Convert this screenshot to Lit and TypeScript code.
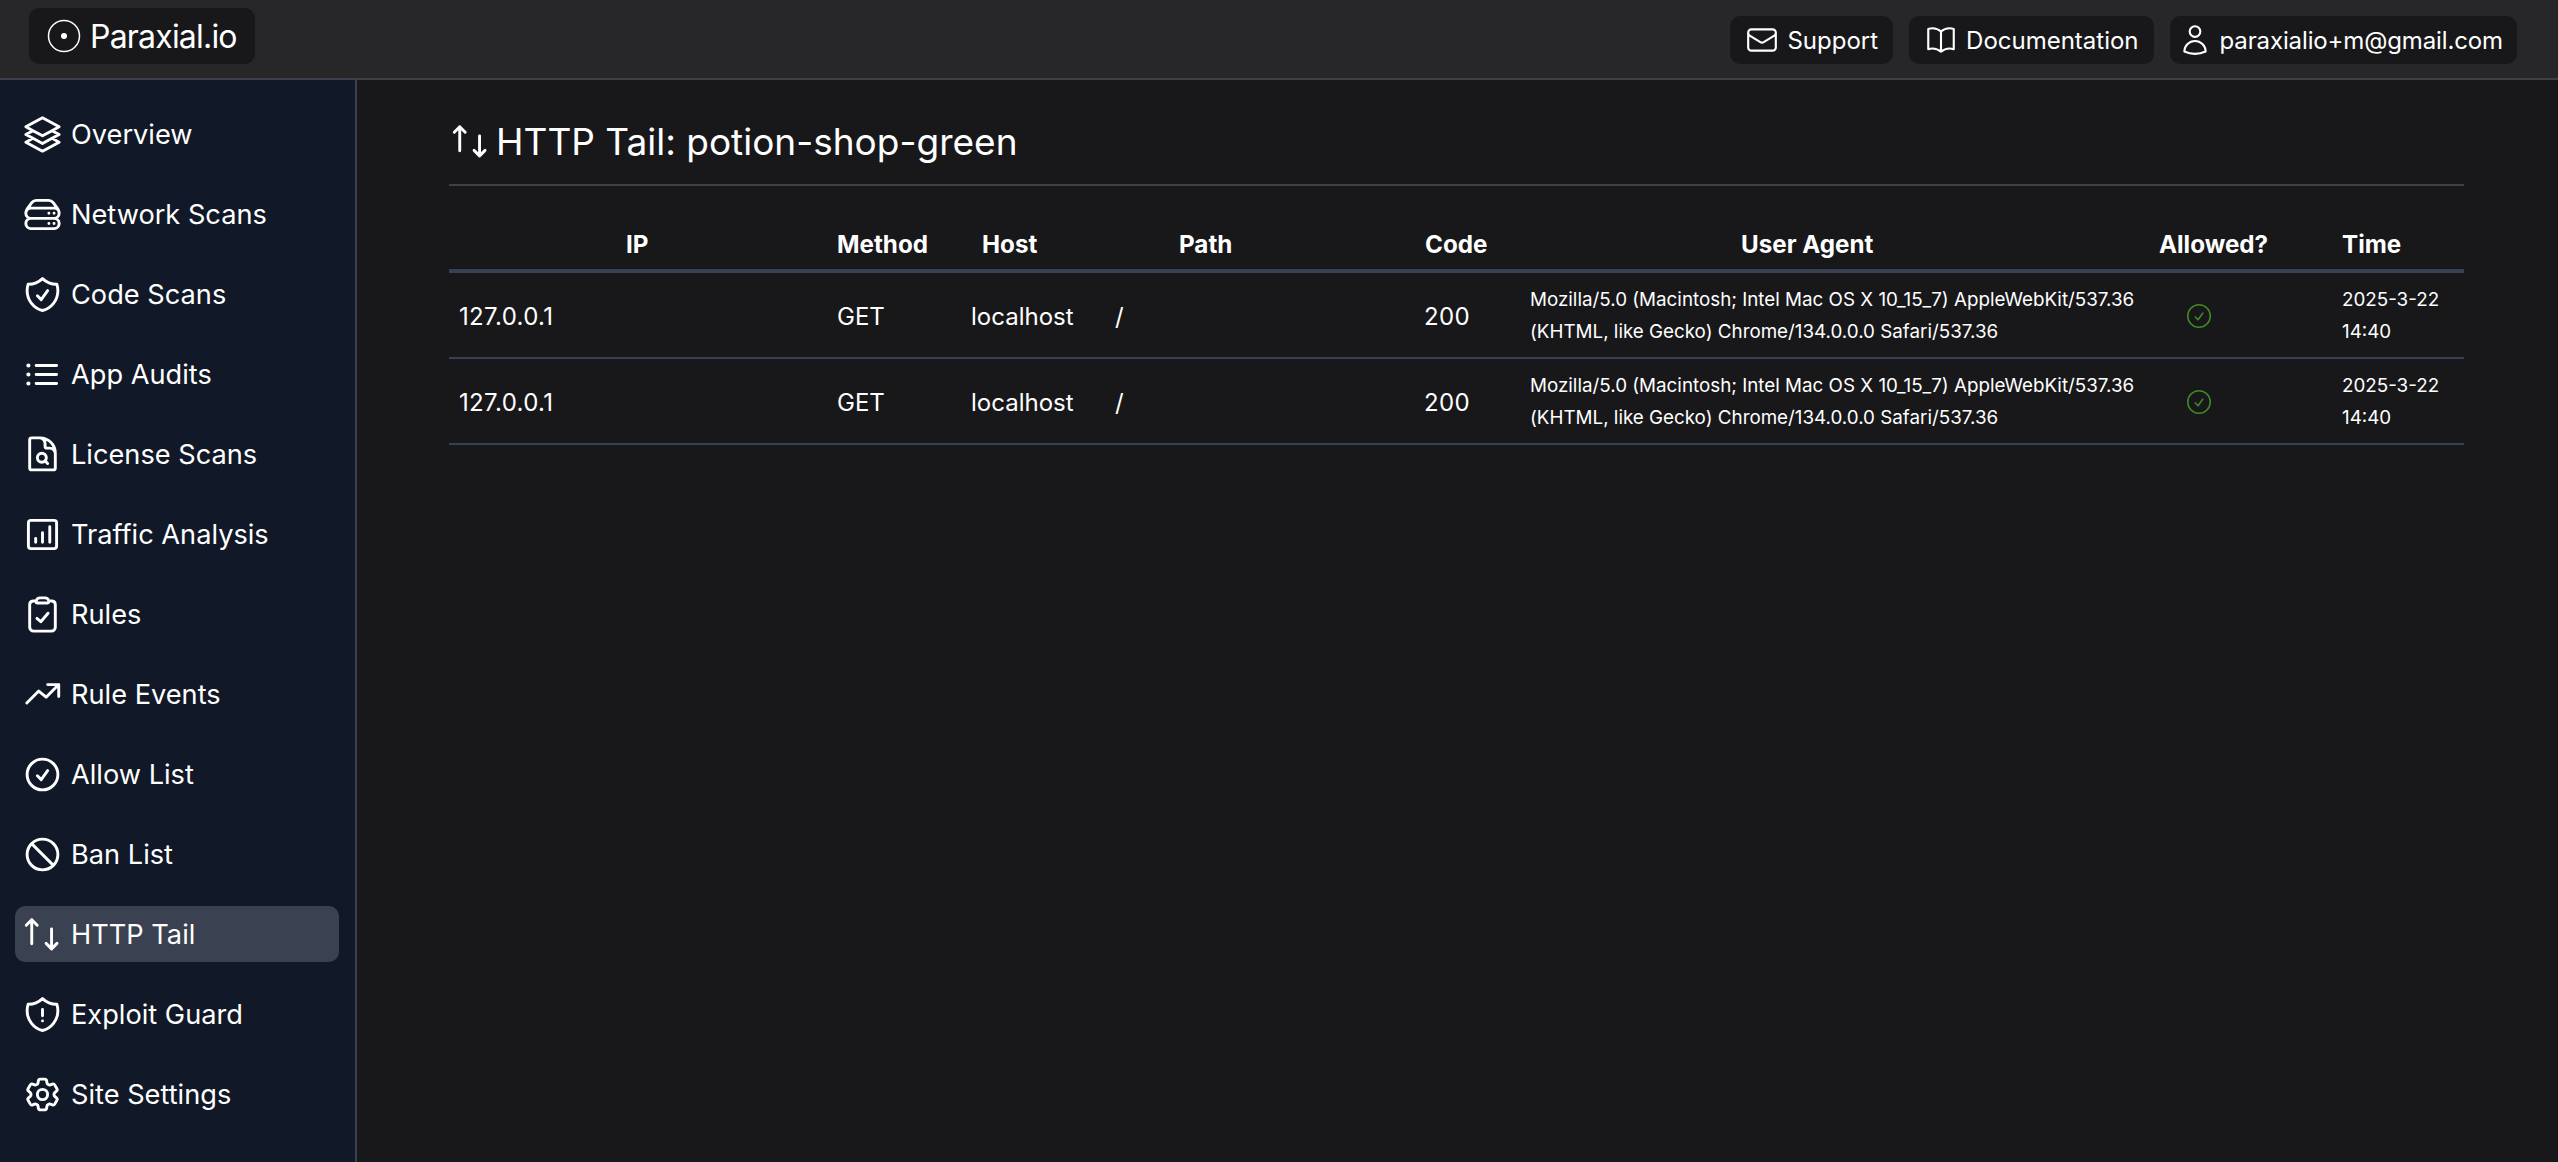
import { LitElement, html, svg, css } from 'lit';
import { customElement } from 'lit/decorators.js';

const ICONS: Record<string, string> = {
  stack: 'M6.429 9.75 2.25 12l4.179 2.25m0-4.5 5.571 3 5.571-3m-11.142 0L2.25 7.5 12 2.25l9.75 5.25-4.179 2.25m0 0L21.75 12l-4.179 2.25m0 0 4.179 2.25L12 21.75 2.25 16.5l4.179-2.25m11.142 0-5.571 3-5.571-3',
  server: 'M5.25 14.25h13.5m-13.5 0a3 3 0 0 1-3-3m3 3a3 3 0 1 0 0 6h13.5a3 3 0 1 0 0-6m-16.5-3a3 3 0 0 1 3-3h13.5a3 3 0 0 1 3 3m-19.5 0a4.5 4.5 0 0 1 .9-2.7L5.737 5.1a3.375 3.375 0 0 1 2.7-1.35h7.126c1.062 0 2.062.5 2.7 1.35l2.587 3.45a4.5 4.5 0 0 1 .9 2.7m0 0a3 3 0 0 1-3 3m0 3h.008v.008h-.008v-.008Zm0-6h.008v.008h-.008v-.008Zm-3 6h.008v.008h-.008v-.008Zm0-6h.008v.008h-.008v-.008Z',
  shieldCheck: 'M9 12.75 11.25 15 15 9.75m-3-7.036A11.959 11.959 0 0 1 3.598 6 11.99 11.99 0 0 0 3 9.749c0 5.592 3.824 10.29 9 11.623 5.176-1.332 9-6.03 9-11.622 0-1.31-.21-2.571-.598-3.751h-.152c-3.196 0-6.1-1.248-8.25-3.285Z',
  list: 'M8.25 6.75h12M8.25 12h12m-12 5.25h12M3.75 6.75h.007v.008H3.75V6.75Zm.375 0a.375.375 0 1 1-.75 0 .375.375 0 0 1 .75 0ZM3.75 12h.007v.008H3.75V12Zm.375 0a.375.375 0 1 1-.75 0 .375.375 0 0 1 .75 0Zm-.375 5.25h.007v.008H3.75v-.008Zm.375 0a.375.375 0 1 1-.75 0 .375.375 0 0 1 .75 0Z',
  docSearch: 'M19.5 14.25v-2.625a3.375 3.375 0 0 0-3.375-3.375h-1.5A1.125 1.125 0 0 1 13.5 7.125v-1.5a3.375 3.375 0 0 0-3.375-3.375H8.25m5.231 13.481L15 17.25m-4.5-15H5.625c-.621 0-1.125.504-1.125 1.125v16.5c0 .621.504 1.125 1.125 1.125h12.75c.621 0 1.125-.504 1.125-1.125V11.25a9 9 0 0 0-9-9Zm3.75 11.625a2.625 2.625 0 1 1-5.25 0 2.625 2.625 0 0 1 5.25 0Z',
  chart: 'M8 16.5v-2.25M12 16.5v-5.5M16.25 16.5v-9M5.25 20.25h13.5a1.5 1.5 0 0 0 1.5-1.5V5.25a1.5 1.5 0 0 0-1.5-1.5H5.25a1.5 1.5 0 0 0-1.5 1.5v13.5a1.5 1.5 0 0 0 1.5 1.5Z',
  clipboard: 'M8.75 14.25 11 16.25 15.25 11.25M15.666 3.888A2.25 2.25 0 0 0 13.5 2.25h-3c-1.03 0-1.9.693-2.166 1.638m7.332 0c.055.194.084.4.084.612v0a.75.75 0 0 1-.75.75H9a.75.75 0 0 1-.75-.75v0c0-.212.03-.418.084-.612m7.332 0c.646.049 1.288.11 1.927.184 1.1.128 1.907 1.077 1.907 2.185V19.5a2.25 2.25 0 0 1-2.25 2.25H6.75A2.25 2.25 0 0 1 4.5 19.5V6.257c0-1.108.806-2.057 1.907-2.185a48.208 48.208 0 0 1 1.927-.184',
  trending: 'M2.8 17 9.8 10l4.3 3.6L21.5 6.2m0 0H15m6.5 0v7',
  checkCircle: 'M9 12.75 11.25 15 15 9.75M21 12a9 9 0 1 1-18 0 9 9 0 0 1 18 0Z',
  ban: 'M18.364 18.364A9 9 0 0 0 5.636 5.636m12.728 12.728A9 9 0 0 1 5.636 5.636m12.728 12.728L5.636 5.636',
  arrows: 'M2.5 6.6 5.7 3.4m0 0 3.2 3.2M5.7 3.4v14M20.5 17.2 17.3 20.4m0 0-3.2-3.2M17.3 20.4V8.7',
  shieldAlert: 'M12 9v3.75m0-10.036A11.959 11.959 0 0 1 3.598 6 11.99 11.99 0 0 0 3 9.75c0 5.592 3.824 10.29 9 11.622 5.176-1.332 9-6.03 9-11.622 0-1.31-.21-2.57-.598-3.75h-.152c-3.196 0-6.1-1.249-8.25-3.286Zm0 13.036h.008v.008H12v-.008Z',
  cog: 'M9.594 3.94c.09-.542.56-.94 1.11-.94h2.593c.55 0 1.02.398 1.11.94l.213 1.281c.063.374.313.686.645.87.074.04.147.083.22.127.325.196.72.257 1.075.124l1.217-.456a1.125 1.125 0 0 1 1.37.49l1.296 2.247a1.125 1.125 0 0 1-.26 1.431l-1.003.827c-.293.241-.438.613-.43.992a7.723 7.723 0 0 1 0 .255c-.008.378.137.75.43.991l1.004.827c.424.35.534.955.26 1.43l-1.298 2.247a1.125 1.125 0 0 1-1.369.491l-1.217-.456c-.355-.133-.75-.072-1.076.124a6.47 6.47 0 0 1-.22.128c-.331.183-.581.495-.644.869l-.213 1.281c-.09.543-.56.94-1.11.94h-2.594c-.55 0-1.019-.398-1.11-.94l-.213-1.281c-.062-.374-.312-.686-.644-.87a6.52 6.52 0 0 1-.22-.127c-.325-.196-.72-.257-1.076-.124l-1.217.456a1.125 1.125 0 0 1-1.369-.49l-1.297-2.247a1.125 1.125 0 0 1 .26-1.431l1.004-.827c.292-.24.437-.613.43-.991a6.932 6.932 0 0 1 0-.255c.007-.38-.138-.751-.43-.992l-1.004-.827a1.125 1.125 0 0 1-.26-1.43l1.297-2.247a1.125 1.125 0 0 1 1.37-.491l1.216.456c.356.133.751.072 1.076-.124.072-.044.146-.086.22-.128.332-.183.582-.495.644-.869l.214-1.28ZM15 12a3 3 0 1 1-6 0 3 3 0 0 1 6 0Z',
  envelope: 'M21.75 6.75v10.5a2.25 2.25 0 0 1-2.25 2.25h-15a2.25 2.25 0 0 1-2.25-2.25V6.75m19.5 0A2.25 2.25 0 0 0 19.5 4.5h-15a2.25 2.25 0 0 0-2.25 2.25m19.5 0v.243a2.25 2.25 0 0 1-1.07 1.916l-7.5 4.615a2.25 2.25 0 0 1-2.36 0L3.32 8.91a2.25 2.25 0 0 1-1.07-1.916V6.75',
  book: 'M12 6.042A8.967 8.967 0 0 0 6 3.75c-1.052 0-2.062.18-3 .512v14.25A8.987 8.987 0 0 1 6 18c2.305 0 4.408.867 6 2.292m0-14.25a8.966 8.966 0 0 1 6-2.292c1.052 0 2.062.18 3 .512v14.25A8.987 8.987 0 0 0 18 18a8.967 8.967 0 0 0-6 2.292m0-14.25v14.25',
  user: 'M15.75 6a3.75 3.75 0 1 1-7.5 0 3.75 3.75 0 0 1 7.5 0ZM4.501 20.118a7.5 7.5 0 0 1 14.998 0A17.933 17.933 0 0 1 12 21.75c-2.676 0-5.216-.584-7.499-1.632Z',
};

const NAV = [
  { label: 'Overview', icon: 'stack' },
  { label: 'Network Scans', icon: 'server' },
  { label: 'Code Scans', icon: 'shieldCheck' },
  { label: 'App Audits', icon: 'list' },
  { label: 'License Scans', icon: 'docSearch' },
  { label: 'Traffic Analysis', icon: 'chart' },
  { label: 'Rules', icon: 'clipboard' },
  { label: 'Rule Events', icon: 'trending' },
  { label: 'Allow List', icon: 'checkCircle' },
  { label: 'Ban List', icon: 'ban' },
  { label: 'HTTP Tail', icon: 'arrows', active: true },
  { label: 'Exploit Guard', icon: 'shieldAlert' },
  { label: 'Site Settings', icon: 'cog' },
];

const HEADERS = ['IP', 'Method', 'Host', 'Path', 'Code', 'User Agent', 'Allowed?', 'Time'];

const UA = 'Mozilla/5.0 (Macintosh; Intel Mac OS X 10_15_7) AppleWebKit/537.36 (KHTML, like Gecko) Chrome/134.0.0.0 Safari/537.36';

const ROWS = [
  { ip: '127.0.0.1', method: 'GET', host: 'localhost', path: '/', code: '200', ua: UA, date: '2025-3-22', time: '14:40' },
  { ip: '127.0.0.1', method: 'GET', host: 'localhost', path: '/', code: '200', ua: UA, date: '2025-3-22', time: '14:40' },
];

function icon(name: string, cls = 'icon') {
  return html`<svg class=${cls} viewBox="0 0 24 24" fill="none" stroke="currentColor" stroke-linecap="round" stroke-linejoin="round">${svg`<path d=${ICONS[name]}></path>`}</svg>`;
}

@customElement('app-root')
export class AppRoot extends LitElement {
  static styles = css`
    :host {
      display: grid;
      grid-template-columns: 357px 1fr;
      grid-template-rows: 80px 1fr;
      height: 100vh;
      overflow: hidden;
      background: #18181b;
      color: #fff;
      font-family: Inter, 'Liberation Sans', sans-serif;
    }
    .topbar {
      grid-column: 1 / 3;
      display: flex;
      align-items: flex-start;
      justify-content: space-between;
      box-sizing: border-box;
      padding: 8px 41px 0 29px;
      background: #27272a;
      border-bottom: 2px solid #3f3f46;
    }
    .logo {
      display: flex;
      align-items: center;
      gap: 7px;
      height: 56px;
      padding: 0 18px 0 16px;
      box-sizing: border-box;
      background: #18181b;
      border-radius: 10px;
      font-size: 32px;
      letter-spacing: -0.8px;
    }
    .logo svg {
      width: 38px;
      height: 38px;
    }
    .links {
      display: flex;
      gap: 16px;
      padding-top: 8px;
    }
    .link {
      display: flex;
      align-items: center;
      gap: 8px;
      height: 48px;
      padding: 0 15px;
      box-sizing: border-box;
      background: #18181b;
      border-radius: 10px;
      font-size: 24px;
    }
    .link.user {
      padding: 0 14px 0 8px;
      letter-spacing: -0.13px;
    }
    .link .icon {
      width: 34px;
      height: 34px;
      stroke-width: 1.5;
    }
    .sidebar {
      display: flex;
      flex-direction: column;
      gap: 24px;
      padding: 26px 16px 0 15px;
      background: #111827;
      border-right: 2px solid #374151;
      border-top: 1px solid #374151;
      margin-top: -1px;
      box-sizing: border-box;
    }
    .nav-item {
      display: flex;
      align-items: center;
      height: 56px;
      flex: none;
      padding-left: 7px;
      border-radius: 10px;
      font-size: 27.2px;
    }
    .nav-item.active {
      background: #3a4150;
    }
    .nav-item .icon {
      width: 41px;
      height: 41px;
      stroke-width: 1.7;
      margin-right: 8px;
      flex: none;
    }
    main {
      padding: 0 94px 0 92px;
      min-width: 0;
    }
    h1 {
      display: flex;
      align-items: center;
      gap: 5px;
      height: 106px;
      margin: 0;
      box-sizing: border-box;
      padding: 18px 0 0 1px;
      border-bottom: 2px solid #3f3f46;
      font-size: 37px;
      font-weight: 400;
    }
    h1 .icon {
      width: 41px;
      height: 41px;
      stroke-width: 1.7;
    }
    .head,
    .row {
      display: grid;
      align-items: center;
    }
    .head {
      grid-template-columns: 211px 145px 197px 246px 316px 418px 183px 1fr;
      height: 87px;
      padding: 33px 0 0 177px;
      box-sizing: border-box;
      border-bottom: 4px solid #374151;
      font-size: 24.2px;
      font-weight: 700;
    }
    .row {
      grid-template-columns: 378px 134px 144px 309px 106px 656px 156px 1fr;
      height: 86px;
      padding: 2px 0 0 10px;
      box-sizing: border-box;
      border-bottom: 2px solid #374151;
      font-size: 24px;
    }
    .num {
      letter-spacing: 0.35px;
    }
    .small {
      font-size: 18.8px;
      line-height: 32px;
    }
    .ua {
      width: 640px;
    }
    .allowed {
      width: 30px;
      height: 30px;
      margin-left: -2px;
      color: #3f8a25;
      stroke-width: 1.25;
    }
  `;

  render() {
    return html`
      <header class="topbar">
        <div class="logo">
          <svg viewBox="0 0 38 38" fill="none" stroke="currentColor" stroke-width="1.5">
            <circle cx="19" cy="19" r="15.5"></circle>
            <circle cx="19" cy="19" r="3" fill="currentColor" stroke="none"></circle>
          </svg>
          <span>Paraxial.io</span>
        </div>
        <div class="links">
          <div class="link">${icon('envelope')}<span>Support</span></div>
          <div class="link">${icon('book')}<span>Documentation</span></div>
          <div class="link user">${icon('user')}<span>paraxialio+m@gmail.com</span></div>
        </div>
      </header>
      <nav class="sidebar">
        ${NAV.map(item => html`
          <div class="nav-item ${item.active ? 'active' : ''}">${icon(item.icon)}<span>${item.label}</span></div>
        `)}
      </nav>
      <main>
        <h1>${icon('arrows')}<span>HTTP Tail: potion-shop-green</span></h1>
        <div class="head">${HEADERS.map(h => html`<span>${h}</span>`)}</div>
        ${ROWS.map(r => html`
          <div class="row">
            <span class="num">${r.ip}</span>
            <span>${r.method}</span>
            <span>${r.host}</span>
            <span>${r.path}</span>
            <span class="num">${r.code}</span>
            <span class="small ua">${r.ua}</span>
            ${icon('checkCircle', 'allowed')}
            <span class="small">${r.date}<br />${r.time}</span>
          </div>
        `)}
      </main>
    `;
  }
}
